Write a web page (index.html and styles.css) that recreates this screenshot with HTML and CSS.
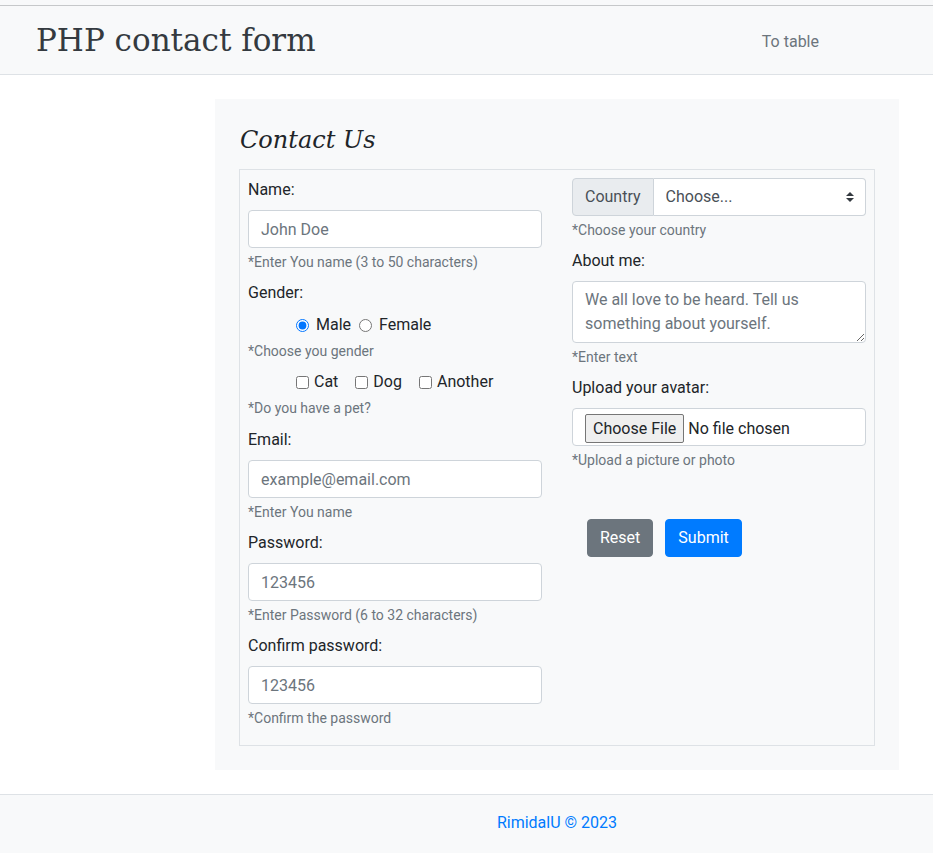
FILE: index.html
```html
<!DOCTYPE html>
<html lang="en">
<head>
<meta charset="utf-8">
<title>PHP contact form</title>
<link rel="stylesheet" href="styles.css">
</head>
<body>
<div class="topline"></div>
<header class="navbar">
  <div class="brand">PHP contact form</div>
  <a class="nav-link" href="#">To table</a>
</header>
<main class="main">
  <section class="card">
    <h2 class="card-title">Contact Us</h2>
    <form class="form-box">
      <div class="col">
        <div class="group">
          <label class="label">Name:</label>
          <input class="control" type="text" placeholder="John Doe">
          <small class="help">*Enter You name (3 to 50 characters)</small>
        </div>
        <div class="group group-choice">
          <label class="label">Gender:</label>
          <div class="inline-row">
            <label class="radio-item"><input type="radio" name="g" checked>Male</label>
            <label class="radio-item"><input type="radio" name="g">Female</label>
          </div>
          <small class="help">*Choose you gender</small>
          <div class="inline-row pets">
            <label class="check-item"><input type="checkbox">Cat</label>
            <label class="check-item"><input type="checkbox">Dog</label>
            <label class="check-item"><input type="checkbox">Another</label>
          </div>
          <small class="help">*Do you have a pet?</small>
        </div>
        <div class="group">
          <label class="label">Email:</label>
          <input class="control" type="email" placeholder="example@email.com">
          <small class="help">*Enter You name</small>
        </div>
        <div class="group">
          <label class="label">Password:</label>
          <input class="control" type="password" placeholder="123456">
          <small class="help">*Enter Password (6 to 32 characters)</small>
        </div>
        <div class="group">
          <label class="label">Confirm password:</label>
          <input class="control" type="password" placeholder="123456">
          <small class="help">*Confirm the password</small>
        </div>
      </div>
      <div class="col">
        <div class="group">
          <div class="input-group">
            <span class="addon">Country</span>
            <div class="select-wrap">
              <select class="select">
                <option>Choose...</option>
              </select>
              <svg class="select-arrow" width="8" height="10" viewBox="0 0 4 5"><path fill="#343a40" d="M2 0L0 2h4zm0 5L0 3h4z"/></svg>
            </div>
          </div>
          <small class="help">*Choose your country</small>
        </div>
        <div class="group">
          <label class="label">About me:</label>
          <textarea class="control textarea" rows="2" placeholder="We all love to be heard. Tell us something about yourself."></textarea>
          <small class="help">*Enter text</small>
        </div>
        <div class="group">
          <label class="label">Upload your avatar:</label>
          <input class="control file" type="file">
          <small class="help">*Upload a picture or photo</small>
        </div>
        <div class="buttons">
          <button type="reset" class="btn btn-secondary">Reset</button>
          <button type="submit" class="btn btn-primary">Submit</button>
        </div>
      </div>
    </form>
  </section>
</main>
<footer class="footer">
  <div class="footer-inner">RimidalU © 2023</div>
</footer>
</body>
</html>
```
FILE: styles.css
```css
* { box-sizing: border-box; }
html, body { margin: 0; padding: 0; }
body {
  font-family: Roboto, "Liberation Sans", sans-serif;
  font-size: 16px;
  line-height: 1.5;
  color: #212529;
  background: #fff;
  width: 933px;
  height: 853px;
  overflow: hidden;
}
.topline {
  height: 6px;
  background: #f8f9fa;
  border-bottom: 1px solid #c6c8ca;
}
.navbar {
  height: 69px;
  background: #f8f9fa;
  border-bottom: 1px solid #dee2e6;
  display: flex;
  align-items: center;
  padding-left: 36px;
}
.brand {
  font-family: "DejaVu Serif", Georgia, serif;
  font-size: 31px;
  line-height: 1.2;
  color: #343a40;
  margin-top: 2px;
}
.nav-link {
  margin-left: auto;
  margin-right: 114px;
  margin-top: 3px;
  color: #6c757d;
  text-decoration: none;
}
.main {
  padding-top: 24px;
}
.card {
  margin-left: 215px;
  width: 684px;
  background: #f8f9fa;
  padding: 24px;
}
.card-title {
  margin: 0 0 12px 1px;
  font-family: "DejaVu Serif", Georgia, serif;
  font-style: italic;
  font-weight: normal;
  font-size: 24px;
  line-height: 34px;
  color: #212529;
}
.form-box {
  border: 1px solid #dee2e6;
  padding: 8px 8px 8px 8px;
  display: grid;
  grid-template-columns: 1fr 1fr;
  column-gap: 30px;
}
.col { min-width: 0; }
.group {
  display: flex;
  flex-direction: column;
  margin-bottom: 8px;
}
.group-choice { margin-bottom: 9px; }
.label {
  margin-bottom: 8px;
  line-height: 24px;
}
.control {
  display: block;
  width: 100%;
  height: 38px;
  padding: 6px 12px;
  font-family: inherit;
  font-size: 16px;
  line-height: 24px;
  color: #495057;
  background: #fff;
  border: 1px solid #ced4da;
  border-radius: 4px;
}
.control::placeholder { color: #6c757d; opacity: 1; }
.textarea {
  height: 62px;
  resize: vertical;
}
.help {
  margin-top: 4px;
  font-size: 14px;
  line-height: 21px;
  color: #6c757d;
}
.inline-row {
  display: flex;
  align-items: center;
  padding-left: 48px;
  height: 24px;
}
.inline-row.pets { margin-top: 8px; }
.radio-item, .check-item {
  display: inline-flex;
  align-items: center;
  line-height: 24px;
}
.radio-item input {
  margin: 0 7px 0 0;
  width: 13px;
  height: 13px;
}
.radio-item { margin-right: 8px; }
.check-item input {
  margin: 0 5px 0 0;
  width: 13px;
  height: 13px;
}
.check-item { margin-right: 17px; }
.input-group {
  display: flex;
  height: 38px;
}
.addon {
  display: flex;
  align-items: center;
  padding: 6px 12px;
  background: #e9ecef;
  border: 1px solid #ced4da;
  border-radius: 4px 0 0 4px;
  color: #495057;
}
.select-wrap {
  position: relative;
  flex: 1;
  display: flex;
}
.select {
  flex: 1;
  appearance: none;
  -webkit-appearance: none;
  height: 38px;
  padding: 6px 28px 6px 12px;
  font-family: inherit;
  font-size: 16px;
  line-height: 24px;
  color: #495057;
  background: #fff;
  border: 1px solid #ced4da;
  border-left: 0;
  border-radius: 0 4px 4px 0;
}
.select-arrow {
  position: absolute;
  right: 12px;
  top: 14px;
  pointer-events: none;
}
.file {
  padding: 4px 12px;
  color: #212529;
  font-size: 16px;
}
.file::file-selector-button {
  font-family: inherit;
  font-size: 16px;
  height: 29px;
  padding: 0 7px;
  margin: 1px 4px 0 0;
  background: #efefef;
  border: 1px solid #767676;
  border-radius: 2px;
  color: #212529;
}
.buttons {
  display: flex;
  gap: 12px;
  margin-top: 48px;
  margin-left: 15px;
}
.btn {
  font-family: inherit;
  font-size: 16px;
  line-height: 24px;
  padding: 6px 12px;
  border: 1px solid transparent;
  border-radius: 4px;
  color: #fff;
}
.btn-secondary { background: #6c757d; border-color: #6c757d; }
.btn-primary { background: #007bff; border-color: #007bff; }
.footer {
  margin-top: 24px;
  border-top: 1px solid #dee2e6;
  background: #f8f9fa;
  height: 60px;
  padding-top: 16px;
}
.footer-inner {
  margin-left: 215px;
  width: 684px;
  text-align: center;
  color: #007bff;
}
```
